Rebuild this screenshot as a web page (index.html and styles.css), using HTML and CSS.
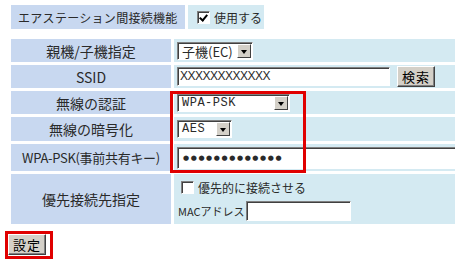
FILE: index.html
```html
<!DOCTYPE html>
<html lang="ja">
<head>
    <meta charset="UTF-8">
    <title>エアステーション間接続機能</title>
    <link rel="stylesheet" href="styles.css">
</head>
<body>

    <!-- Feature toggle -->
    <div class="feature">
        <div class="feature-label">エアステーション間接続機能</div>
        <label class="feature-check"><span class="check checked"></span>使用する</label>
    </div>

    <!-- Settings grid -->
    <div class="settings">
        <div class="name">親機/子機指定</div>
        <div class="value">
            <span class="combo combo-mode"><span class="combo-text">子機(EC)</span><span class="combo-btn"></span></span>
        </div>

        <div class="name">SSID</div>
        <div class="value">
            <span class="field field-ssid">XXXXXXXXXXXX</span>
            <button type="button" class="btn btn-search">検索</button>
        </div>

        <div class="name">無線の認証</div>
        <div class="value">
            <span class="combo combo-auth"><span class="combo-text mono">WPA-PSK</span><span class="combo-btn"></span></span>
        </div>

        <div class="name">無線の暗号化</div>
        <div class="value">
            <span class="combo combo-enc"><span class="combo-text mono">AES</span><span class="combo-btn"></span></span>
        </div>

        <div class="name name-key">WPA-PSK(事前共有キー)</div>
        <div class="value">
            <span class="field field-key">●●●●●●●●●●●●●</span>
        </div>

        <div class="name">優先接続先指定</div>
        <div class="value value-stack">
            <label class="line"><span class="check"></span>優先的に接続させる</label>
            <div class="line line-mac">MACアドレス <span class="field field-mac"></span></div>
        </div>

        <!-- highlight around auth/encryption/key -->
        <div class="mark mark-wpa"></div>
    </div>

    <div class="actions">
        <button type="button" class="btn btn-submit">設定</button>
        <div class="mark mark-submit"></div>
    </div>

</body>
</html>
```

FILE: styles.css
```css
/* General */
body {
    margin: 0;
    padding: 5px 0 0 11px;
    font-family: "Noto Sans CJK JP", sans-serif;
    font-size: 13px;
    color: #2a2a2a;
    background: #fff;
    overflow: hidden;
    width: 455px;
    height: 267px;
    box-sizing: border-box;
}

/* Feature toggle */
.feature {
    display: flex;
    gap: 3px;
    height: 24px;
    white-space: nowrap;
}

.feature-label {
    width: 174px;
    box-sizing: border-box;
    padding-left: 7px;
    background: #c8d8f0;
    display: flex;
    align-items: center;
    font-size: 12px;
    letter-spacing: 0.3px;
}

.feature-check {
    width: 76px;
    box-sizing: border-box;
    padding-left: 9px;
    background: #d4eaf2;
    display: flex;
    align-items: center;
    gap: 4px;
    font-size: 12px;
}

/* Checkbox */
.check {
    display: inline-block;
    flex: none;
    width: 11px;
    height: 11px;
    background: #fff;
    border: 1px solid;
    border-color: #808080 #fff #fff #808080;
    box-shadow: inset 1px 1px 0 #404040;
    position: relative;
}

.check.checked::after {
    content: "";
    position: absolute;
    left: 3px;
    top: 1px;
    width: 3px;
    height: 6px;
    border: solid #000;
    border-width: 0 2px 2px 0;
    transform: rotate(40deg);
}

/* Settings grid */
.settings {
    position: relative;
    margin-top: 10px;
    display: grid;
    grid-template-columns: 160px 300px;
    grid-template-rows: 23px 23px 23px 24px 27px 50px;
    gap: 3px;
    white-space: nowrap;
}

.name {
    background: #c8d8f0;
    display: flex;
    align-items: center;
    justify-content: center;
    font-size: 14px;
}

.name-key {
    font-size: 13px;
    letter-spacing: -0.3px;
}

.value {
    background: #d4eaf2;
    display: flex;
    align-items: center;
    padding-left: 3px;
}

.value-stack {
    flex-direction: column;
    align-items: flex-start;
    justify-content: center;
    padding-left: 7px;
    gap: 3px;
}

.line {
    display: flex;
    align-items: center;
    gap: 4px;
    font-size: 12px;
    height: 20px;
}

.line-mac {
    margin-left: -3px;
    font-size: 11px;
    gap: 1px;
}

/* Combo boxes */
.combo {
    display: inline-flex;
    align-items: stretch;
    height: 18px;
    box-sizing: border-box;
    background: #fff;
    border: 1px solid;
    border-color: #808080 #fff #fff #808080;
    box-shadow: inset 1px 1px 0 #404040;
    padding: 1px;
}

.combo-text {
    flex: 1;
    padding-left: 3px;
    line-height: 15px;
    font-size: 13px;
}

.mono {
    font-family: "Liberation Mono", monospace;
    font-size: 12px;
    letter-spacing: 0.5px;
}

.combo-btn {
    width: 14px;
    background: #d4d0c8;
    border: 1px solid;
    border-color: #fff #404040 #404040 #fff;
    box-sizing: border-box;
    position: relative;
}

.combo-btn::after {
    content: "";
    position: absolute;
    left: 3px;
    top: 5px;
    border-left: 3.5px solid transparent;
    border-right: 3.5px solid transparent;
    border-top: 4px solid #000;
}

.combo-mode { width: 76px; }
.combo-auth { width: 113px; }
.combo-enc { width: 55px; }

/* Text fields */
.field {
    display: inline-block;
    box-sizing: border-box;
    height: 19px;
    background: #fff;
    border: 1px solid;
    border-color: #808080 #fff #fff #808080;
    box-shadow: inset 1px 1px 0 #404040;
    padding: 0 2px;
    line-height: 17px;
}

.field-ssid {
    width: 213px;
    font-family: "Liberation Sans", sans-serif;
    font-size: 12px;
    letter-spacing: -0.5px;
}

.field-key {
    width: 300px;
    height: 22px;
    line-height: 20px;
    font-family: "DejaVu Sans", sans-serif;
    font-size: 7px;
    letter-spacing: 1.6px;
    padding-left: 5px;
}

.field-mac {
    width: 105px;
    height: 20px;
}

/* Buttons */
.btn {
    font-family: "Noto Sans CJK JP", sans-serif;
    font-size: 13px;
    background: #d4d0c8;
    color: #000;
    border: 1px solid;
    border-color: #fff #404040 #404040 #fff;
    box-shadow: inset -1px -1px 0 #808080;
    padding: 0;
    height: 21px;
    line-height: 17px;
    letter-spacing: 1px;
}

.btn-search {
    width: 38px;
    margin-left: 7px;
}

.btn-submit {
    width: 38px;
}

/* Red highlight frames */
.mark {
    position: absolute;
    border: 3px solid #e00000;
    box-sizing: border-box;
}

.mark-wpa {
    left: 159px;
    top: 52px;
    width: 136px;
    height: 82px;
}

.actions {
    position: relative;
    margin-top: 10px;
    margin-left: -3px;
}

.mark-submit {
    left: -3px;
    top: -3px;
    width: 48px;
    height: 28px;
}
```
